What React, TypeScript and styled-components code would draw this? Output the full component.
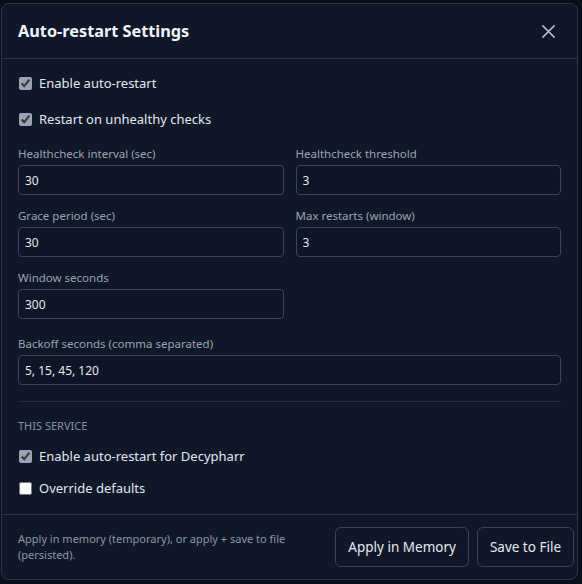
import styled, { createGlobalStyle } from "styled-components";

const GlobalStyle = createGlobalStyle`
  html, body {
    margin: 0;
    padding: 0;
    background: #0a0f1c;
  }
  body {
    font-family: "Noto Sans", "Open Sans", sans-serif;
    color: #e2e8f0;
  }
`;

const Modal = styled.div`
  width: 577px;
  height: 577px;
  margin: 3px 0 0 1px;
  box-sizing: border-box;
  background: #0f1729;
  border: 1px solid #2b3648;
  border-radius: 8px;
  display: flex;
  flex-direction: column;
  overflow: hidden;
`;

const Header = styled.div`
  height: 54px;
  flex-shrink: 0;
  padding: 0 16px;
  display: flex;
  align-items: center;
  justify-content: space-between;
  border-bottom: 1px solid #2b3648;
`;

const Title = styled.h2`
  margin: 0;
  font-size: 16.3px;
  font-weight: 700;
  color: #f1f5f9;
`;

const CloseButton = styled.button`
  background: none;
  border: none;
  padding: 0;
  width: 20px;
  height: 20px;
  margin-right: 3px;
  display: flex;
  align-items: center;
  justify-content: center;
  color: #b4bdcb;
  cursor: pointer;
`;

const Body = styled.div`
  flex: 1;
  padding: 14px 16px 16px;
  display: flex;
  flex-direction: column;
`;

const CheckRow = styled.label<{ $gap?: number }>`
  display: flex;
  align-items: center;
  gap: 7px;
  height: 20px;
  margin-bottom: ${(p) => p.$gap ?? 0}px;
  font-size: 13px;
  color: #e2e8f0;
`;

const Check = styled.input.attrs({ type: "checkbox" })`
  width: 13px;
  height: 13px;
  margin: 0 0 0 1px;
  accent-color: #9aa3b1;
`;

const Grid = styled.div`
  display: grid;
  grid-template-columns: 1fr 1fr;
  column-gap: 12px;
  row-gap: 13px;
  margin-top: 17px;
`;

const Field = styled.div<{ $wide?: boolean }>`
  display: flex;
  flex-direction: column;
  gap: 3px;
  ${(p) => (p.$wide ? "margin-top: 17px;" : "")}
`;

const Label = styled.span`
  font-size: 11.5px;
  line-height: 16px;
  color: #9aa5b6;
`;

const Input = styled.input`
  height: 30px;
  box-sizing: border-box;
  padding: 0 6px;
  background: #0d1526;
  border: 1px solid #3a4557;
  border-radius: 4px;
  color: #e5e9f0;
  font-family: inherit;
  font-size: 12px;
  outline: none;
`;

const Divider = styled.hr`
  border: none;
  border-top: 1px solid #222c3d;
  margin: 16px 0 16px;
  width: 100%;
`;

const SectionTitle = styled.div`
  font-size: 11px;
  line-height: 16px;
  text-transform: uppercase;
  color: #8793a6;
  margin-bottom: 12px;
`;

const Footer = styled.div`
  flex-shrink: 0;
  border-top: 1px solid #2b3648;
  padding: 12px 3px 14px 16px;
  display: flex;
  align-items: center;
  gap: 8px;
`;

const Hint = styled.p`
  flex: 1;
  margin: 0;
  font-size: 11px;
  line-height: 16px;
  color: #8c97a8;
`;

const Button = styled.button`
  height: 40px;
  padding: 0 12px;
  background: transparent;
  border: 1px solid #3a4557;
  border-radius: 6px;
  color: #e5e9f0;
  font-family: inherit;
  font-size: 13.5px;
  white-space: nowrap;
  cursor: pointer;
`;

const App = () => {
  return (
    <>
      <GlobalStyle />
      <Modal>
        <Header>
          <Title>Auto-restart Settings</Title>
          <CloseButton aria-label="Close">
            <svg width="15" height="15" viewBox="0 0 16 16" fill="none">
              <path
                d="M2 2 L14 14 M14 2 L2 14"
                stroke="currentColor"
                strokeWidth="1.6"
                strokeLinecap="round"
              />
            </svg>
          </CloseButton>
        </Header>
        <Body>
          <CheckRow $gap={16}>
            <Check defaultChecked />
            Enable auto-restart
          </CheckRow>
          <CheckRow>
            <Check defaultChecked />
            Restart on unhealthy checks
          </CheckRow>
          <Grid>
            <Field>
              <Label>Healthcheck interval (sec)</Label>
              <Input defaultValue="30" />
            </Field>
            <Field>
              <Label>Healthcheck threshold</Label>
              <Input defaultValue="3" />
            </Field>
            <Field>
              <Label>Grace period (sec)</Label>
              <Input defaultValue="30" />
            </Field>
            <Field>
              <Label>Max restarts (window)</Label>
              <Input defaultValue="3" />
            </Field>
            <Field>
              <Label>Window seconds</Label>
              <Input defaultValue="300" />
            </Field>
          </Grid>
          <Field $wide>
            <Label>Backoff seconds (comma separated)</Label>
            <Input defaultValue="5, 15, 45, 120" />
          </Field>
          <Divider />
          <SectionTitle>This service</SectionTitle>
          <CheckRow $gap={12}>
            <Check defaultChecked />
            Enable auto-restart for Decypharr
          </CheckRow>
          <CheckRow>
            <Check />
            Override defaults
          </CheckRow>
        </Body>
        <Footer>
          <Hint>
            Apply in memory (temporary), or apply + save to file (persisted).
          </Hint>
          <Button>Apply in Memory</Button>
          <Button>Save to File</Button>
        </Footer>
      </Modal>
    </>
  );
};

export default App;
